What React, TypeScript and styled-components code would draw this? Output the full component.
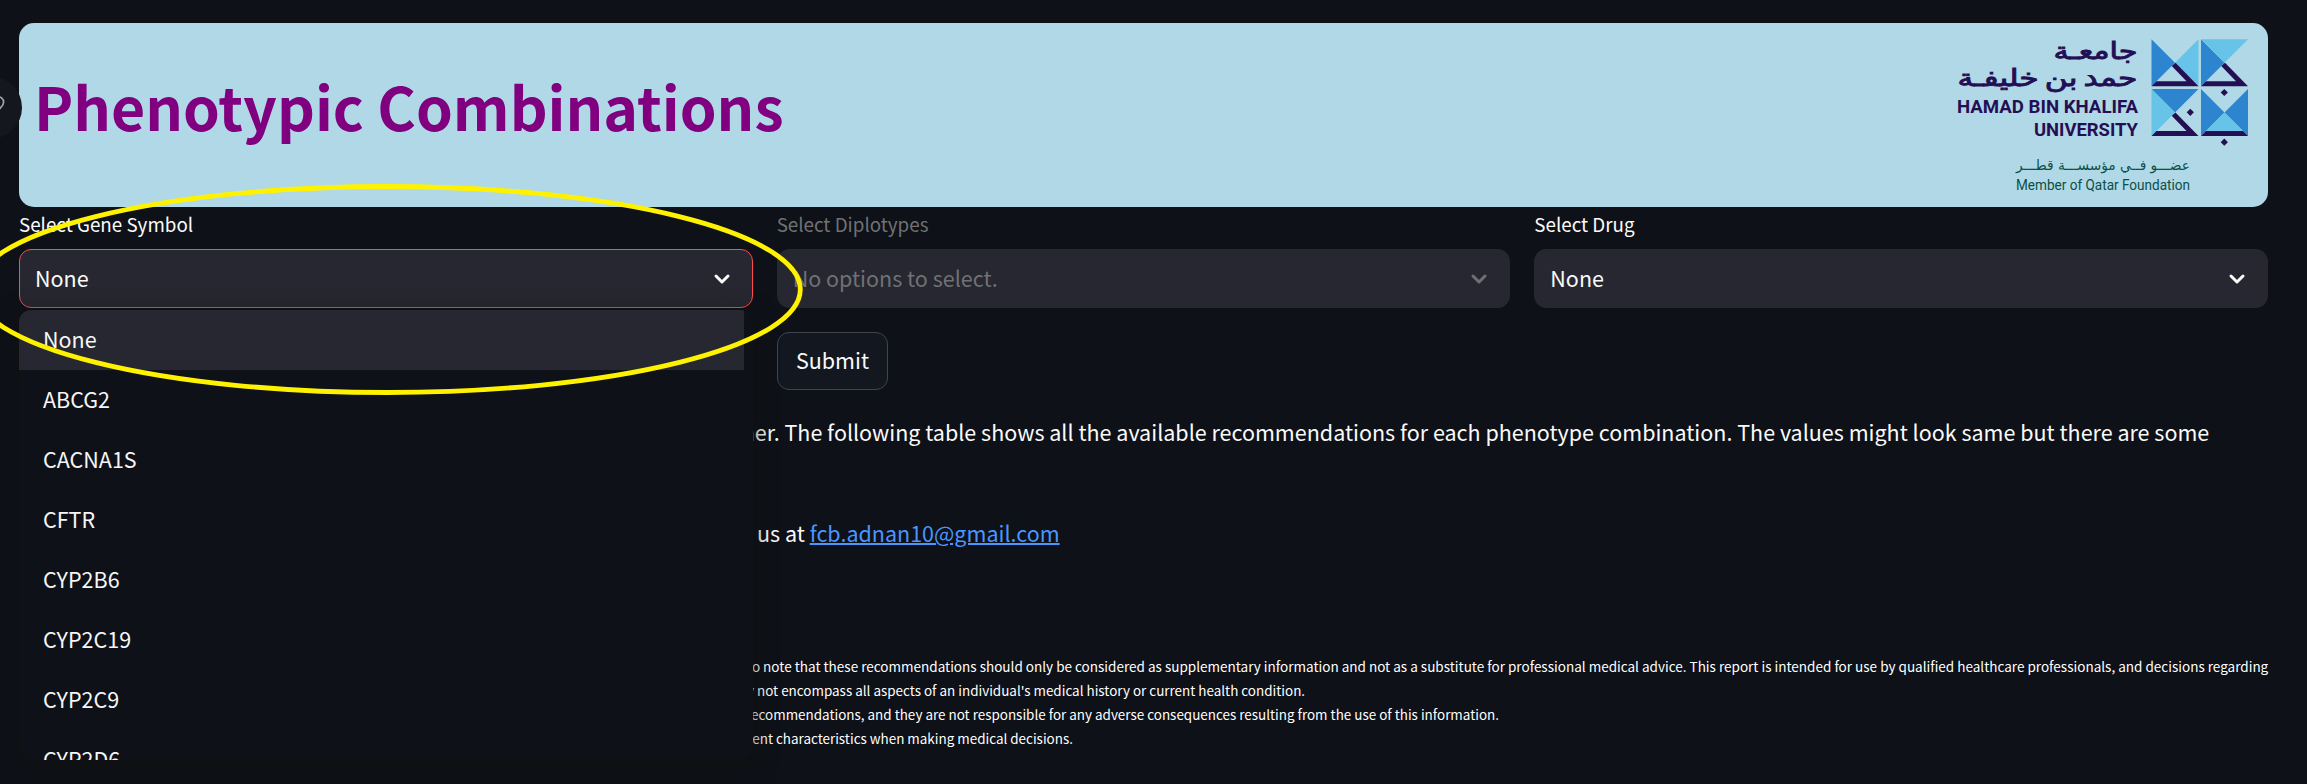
import React from "react";
import styled, { createGlobalStyle } from "styled-components";

const GlobalStyle = createGlobalStyle`
  * { box-sizing: border-box; }
  body {
    margin: 0;
    background: #0e1117;
    color: #fafafa;
    font-family: "Noto Sans CJK SC", "Open Sans", sans-serif;
    overflow: hidden;
  }
`;

const Page = styled.main`
  position: relative;
  height: 784px;
  padding: 23px 39px 0 19px;
  overflow: hidden;
`;

const Banner = styled.header`
  display: flex;
  align-items: center;
  justify-content: space-between;
  height: 184px;
  padding: 0 8px 0 15px;
  border-radius: 15px;
  background: #b0d8e6;
`;

const Title = styled.h1`
  margin: 0 0 19px;
  color: #800080;
  font-size: 58.95px;
  line-height: 72px;
  font-weight: 700;
`;

const LogoSvg = styled.svg`
  display: block;
  flex: none;
`;

const ToggleBubble = styled.div`
  position: absolute;
  left: -41px;
  top: 76px;
  width: 63px;
  height: 63px;
  border-radius: 50%;
  background: #14171e;

  svg {
    position: absolute;
    left: 32px;
    top: 19px;
  }
`;

const Columns = styled.section`
  display: grid;
  grid-template-columns: repeat(3, 1fr);
  column-gap: 24px;
`;

const Field = styled.div<{ $disabled?: boolean }>`
  position: relative;
  color: ${(p) => (p.$disabled ? "#707174" : "#fafafa")};
`;

const Label = styled.label`
  display: block;
  height: 42px;
  padding-top: 3px;
  font-size: 18.8px;
  line-height: 28px;
`;

const Select = styled.div<{ $focused?: boolean }>`
  display: flex;
  align-items: center;
  justify-content: space-between;
  height: 59px;
  padding: 0 18px 2px 15px;
  border: 1px solid ${(p) => (p.$focused ? "#ff4b4b" : "#262730")};
  border-radius: 12px;
  background: #262730;
  font-size: 21.5px;
  line-height: 36px;
`;

const Menu = styled.ul`
  position: absolute;
  z-index: 2;
  top: 103px;
  left: 0;
  right: 0;
  height: 450px;
  margin: 0;
  padding: 0;
  overflow: hidden;
  list-style: none;
  border-radius: 12px;
  background: #0e1117;
  box-shadow: 0 6px 24px #10100fb0;
`;

const Option = styled.li<{ $active?: boolean }>`
  height: 60px;
  margin-right: 9px;
  padding-left: 24px;
  background: ${(p) => (p.$active ? "#262730" : "transparent")};
  color: #f6f6f6;
  font-size: 21.5px;
  line-height: 57px;
`;

const Submit = styled.button`
  display: block;
  width: 111px;
  height: 58px;
  margin: 24px 0 0 758px;
  padding: 0 0 2px;
  border: 1px solid #41444c;
  border-radius: 12px;
  background: #131720;
  color: #fafafa;
  font: inherit;
  font-size: 21.5px;
  line-height: 36px;
`;

const Notes = styled.section`
  padding-top: 24px;
`;

const Note = styled.p<{ $indent: number }>`
  margin: 0 0 65px;
  padding-left: ${(p) => p.$indent}px;
  font-size: 21.5px;
  line-height: 36px;
  white-space: nowrap;
`;

const Link = styled.a`
  color: #4a95ff;
  text-decoration: underline;
  text-decoration-thickness: 2px;
`;

const Disclaimer = styled.section`
  margin-top: 103px;
`;

const Fine = styled.p<{ $indent: number; $size?: number }>`
  margin: 0;
  padding-left: ${(p) => p.$indent}px;
  color: #ffffff;
  font-size: ${(p) => p.$size ?? 13.45}px;
  line-height: 24px;
  white-space: nowrap;
`;

const Annotation = styled.svg`
  position: absolute;
  z-index: 3;
  left: 0;
  top: 0;
  pointer-events: none;
`;

const Chevron = () => (
  <svg width="24" height="24" viewBox="0 0 24 24" fill="none" stroke="currentColor" strokeWidth="3" strokeLinecap="round" strokeLinejoin="round">
    <path d="M6 10l6 6 6-6" />
  </svg>
);

const NAVY = "#240f55";
const BLUE = "#2d85d0";
const SKY = "#67c3e8";
const GREEN = "#0b5046";

const Diamond = ({ x, y }: { x: number; y: number }) => (
  <path d={`M${x} ${y - 3.6}l3.6 3.6-3.6 3.6-3.6-3.6z`} fill={NAVY} />
);

const Hook = () => (
  <path d="M20.5 26.5L24 23.5 47 47H0L5 42H35L20.5 27z" fill={NAVY} />
);

const UniversityLogo = () => (
  <LogoSvg width="310" height="184" viewBox="1950 23 310 184">
    <g fill={NAVY}>
      <g fontFamily="DejaVu Sans, sans-serif" direction="rtl" stroke={NAVY} strokeWidth="0.9">
        <text x="2137.5" y="59" fontSize="24" textLength="84" lengthAdjust="spacingAndGlyphs">جامعـة</text>
        <text x="2137.5" y="85.5" fontSize="24" wordSpacing="-3" textLength="180" lengthAdjust="spacingAndGlyphs">حمد بن خليفـة</text>
      </g>
      <g fontFamily="Roboto, sans-serif" fontWeight="700">
        <text x="1957" y="112.7" fontSize="18.4" textLength="181" lengthAdjust="spacingAndGlyphs">HAMAD BIN KHALIFA</text>
        <text x="2034" y="135.7" fontSize="18.4" textLength="104" lengthAdjust="spacingAndGlyphs">UNIVERSITY</text>
      </g>
    </g>
    <g fill={GREEN}>
      <text x="2190" y="170" fontSize="14" fontFamily="DejaVu Sans, sans-serif" direction="rtl" textLength="174" lengthAdjust="spacingAndGlyphs">عضـــو فــي مؤسســـة قطـــر</text>
      <text x="2016" y="190.3" fontSize="14" fontFamily="Roboto, sans-serif" textLength="174" lengthAdjust="spacingAndGlyphs">Member of Qatar Foundation</text>
    </g>
    <g transform="translate(2151.5 39.2)">
      <path d="M0 0L23.5 23.5 0 47z" fill={BLUE} />
      <path d="M47 0V47L23.5 23.5z" fill={SKY} />
      <Hook />
    </g>
    <g transform="translate(2201 39.2)">
      <path d="M0 0L23.5 23.5 0 47z" fill={BLUE} />
      <path d="M0 0H47L23.5 23.5z" fill={SKY} />
      <Hook />
    </g>
    <g transform="translate(2151.5 89)">
      <path d="M0 0H47L23.5 23.5z" fill={BLUE} />
      <path d="M0 0L23.5 23.5 0 47z" fill={SKY} />
      <Hook />
    </g>
    <g transform="translate(2201 89)">
      <path d="M0 0L23.5 23.5 0 47zM47 0V47L23.5 23.5z" fill={BLUE} />
      <path d="M23.5 23.5L42 42H5z" fill={SKY} />
      <path d="M5 42H42L47 47H0z" fill={NAVY} />
    </g>
    <Diamond x={2224.3} y={92.5} />
    <Diamond x={2190.3} y={112.3} />
    <Diamond x={2224.3} y={142.2} />
  </LogoSvg>
);

const genes = ["None", "ABCG2", "CACNA1S", "CFTR", "CYP2B6", "CYP2C19", "CYP2C9", "CYP2D6"];

export default function App() {
  return (
    <Page>
      <GlobalStyle />
      <Banner>
        <Title>Phenotypic Combinations</Title>
        <UniversityLogo />
      </Banner>
      <ToggleBubble>
        <svg width="16" height="20" viewBox="0 0 16 20" fill="none" stroke="#a3a4a7" strokeWidth="1.7">
          <path d="M6 2C10 1.5 12.6 4 12.6 7.2 12.6 10.5 10 12 8 14.5" />
        </svg>
      </ToggleBubble>
      <Columns>
        <Field>
          <Label>Select Gene Symbol</Label>
          <Select $focused>None<Chevron /></Select>
          <Menu>
            {genes.map((g, i) => <Option key={g} $active={i === 0}>{g}</Option>)}
          </Menu>
        </Field>
        <Field $disabled>
          <Label>Select Diplotypes</Label>
          <Select>No options to select.<Chevron /></Select>
        </Field>
        <Field>
          <Label>Select Drug</Label>
          <Select>None<Chevron /></Select>
        </Field>
      </Columns>
      <Submit>Submit</Submit>
      <Notes>
        <Note $indent={702}>other. The following table shows all the available recommendations for each phenotype combination. The values might look same but there are some</Note>
        <Note $indent={738}>us at <Link>fcb.adnan10@gmail.com</Link></Note>
      </Notes>
      <Disclaimer>
        <Fine $indent={728} $size={13.52}>to note that these recommendations should only be considered as supplementary information and not as a substitute for professional medical advice. This report is intended for use by qualified healthcare professionals, and decisions regarding</Fine>
        <Fine $indent={708}>may not encompass all aspects of an individual's medical history or current health condition.</Fine>
        <Fine $indent={727}>recommendations, and they are not responsible for any adverse consequences resulting from the use of this information.</Fine>
        <Fine $indent={709}>patient characteristics when making medical decisions.</Fine>
      </Disclaimer>
      <Annotation width="820" height="410" fill="none">
        <ellipse cx="387.5" cy="289.5" rx="412.8" ry="103" stroke="#fff200" strokeWidth="4.8" />
      </Annotation>
    </Page>
  );
}
